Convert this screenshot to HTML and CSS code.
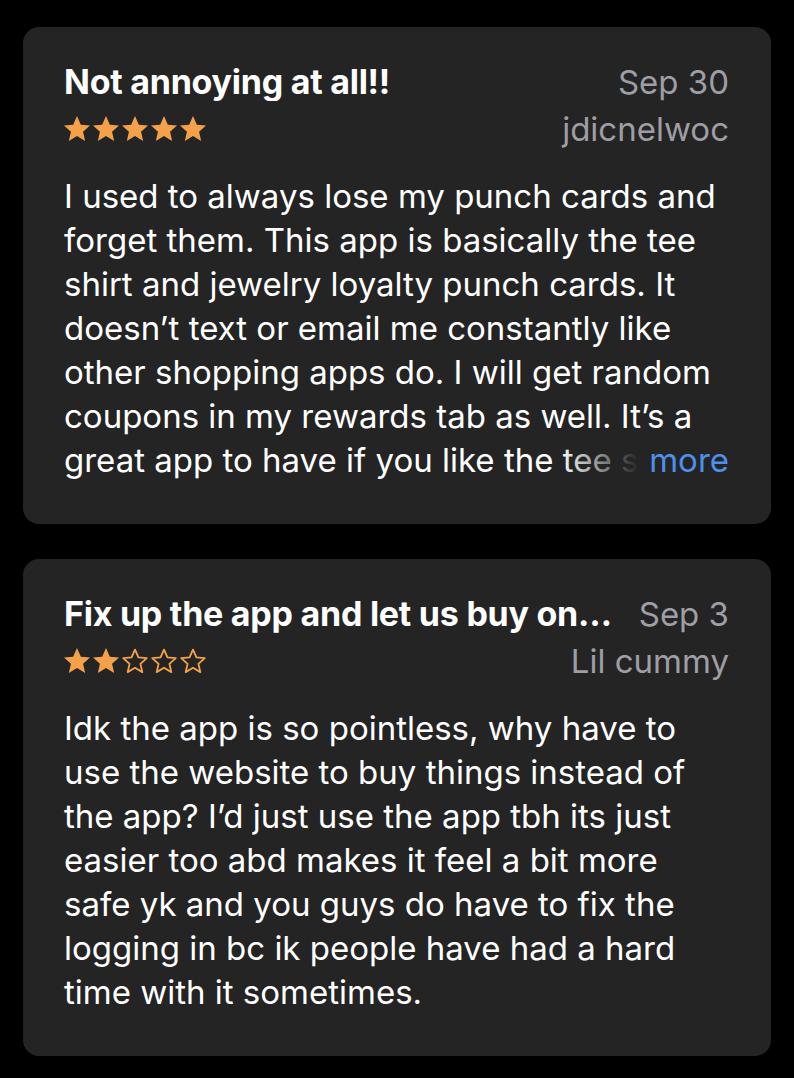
FILE: index.html
```
<!DOCTYPE html>
<html lang="en">
<head>
    <meta charset="UTF-8">
    <meta name="viewport" content="width=device-width, initial-scale=1.0">
    <title>Reviews</title>
    <link rel="stylesheet" href="styles.css">
</head>
<body>
    <div class="list">
        <div class="review">
            <div class="head">
                <div class="title">Not annoying at all!!</div>
                <div class="date">Sep 30</div>
            </div>
            <div class="sub">
                <div class="stars">
                    <svg viewBox="1.5 1.5 21 20"><path class="full" d="M12 1.5l3.1 6.9 7.4.7-5.6 5 1.7 7.4L12 17.6l-6.6 3.9 1.7-7.4-5.6-5 7.4-.7z"/></svg>
                    <svg viewBox="1.5 1.5 21 20"><path class="full" d="M12 1.5l3.1 6.9 7.4.7-5.6 5 1.7 7.4L12 17.6l-6.6 3.9 1.7-7.4-5.6-5 7.4-.7z"/></svg>
                    <svg viewBox="1.5 1.5 21 20"><path class="full" d="M12 1.5l3.1 6.9 7.4.7-5.6 5 1.7 7.4L12 17.6l-6.6 3.9 1.7-7.4-5.6-5 7.4-.7z"/></svg>
                    <svg viewBox="1.5 1.5 21 20"><path class="full" d="M12 1.5l3.1 6.9 7.4.7-5.6 5 1.7 7.4L12 17.6l-6.6 3.9 1.7-7.4-5.6-5 7.4-.7z"/></svg>
                    <svg viewBox="1.5 1.5 21 20"><path class="full" d="M12 1.5l3.1 6.9 7.4.7-5.6 5 1.7 7.4L12 17.6l-6.6 3.9 1.7-7.4-5.6-5 7.4-.7z"/></svg>
                </div>
                <div class="author">jdicnelwoc</div>
            </div>
            <div class="body clamp">
                I used to always lose my punch cards and<br>
                forget them. This app is basically the tee<br>
                shirt and jewelry loyalty punch cards. It<br>
                doesn’t text or email me constantly like<br>
                other shopping apps do. I will get random<br>
                coupons in my rewards tab as well. It’s a<br>
                great app to have if you like the tee shirt and jewelry
                <span class="more">more</span>
            </div>
        </div>

        <div class="review">
            <div class="head">
                <div class="title">Fix up the app and let us buy on the app please</div>
                <div class="date">Sep 3</div>
            </div>
            <div class="sub">
                <div class="stars">
                    <svg viewBox="1.5 1.5 21 20"><path class="full" d="M12 1.5l3.1 6.9 7.4.7-5.6 5 1.7 7.4L12 17.6l-6.6 3.9 1.7-7.4-5.6-5 7.4-.7z"/></svg>
                    <svg viewBox="1.5 1.5 21 20"><path class="full" d="M12 1.5l3.1 6.9 7.4.7-5.6 5 1.7 7.4L12 17.6l-6.6 3.9 1.7-7.4-5.6-5 7.4-.7z"/></svg>
                    <svg viewBox="1.5 1.5 21 20"><path class="empty" d="M12 2.7l2.8 6.3 6.7.6-5.1 4.6 1.5 6.7L12 17.4l-5.9 3.5 1.5-6.7-5.1-4.6 6.7-.6z"/></svg>
                    <svg viewBox="1.5 1.5 21 20"><path class="empty" d="M12 2.7l2.8 6.3 6.7.6-5.1 4.6 1.5 6.7L12 17.4l-5.9 3.5 1.5-6.7-5.1-4.6 6.7-.6z"/></svg>
                    <svg viewBox="1.5 1.5 21 20"><path class="empty" d="M12 2.7l2.8 6.3 6.7.6-5.1 4.6 1.5 6.7L12 17.4l-5.9 3.5 1.5-6.7-5.1-4.6 6.7-.6z"/></svg>
                </div>
                <div class="author">Lil cummy</div>
            </div>
            <div class="body">
                Idk the app is so pointless, why have to<br>
                use the website to buy things instead of<br>
                the app? I’d just use the app tbh its just<br>
                easier too abd makes it feel a bit more<br>
                safe yk and you guys do have to fix the<br>
                logging in bc ik people have had a hard<br>
                time with it sometimes.
            </div>
        </div>
    </div>
</body>
</html>
```

FILE: styles.css
```
* {
    margin: 0;
    padding: 0;
    box-sizing: border-box;
}
body {
    background: #000;
    font-family: Inter, "Noto Sans", sans-serif;
    color: #fff;
}
.list {
    display: flex;
    flex-direction: column;
    gap: 35px;
    padding: 27px 23px 0 23px;
}
.review {
    height: 497px;
    background: #242424;
    border-radius: 16px;
    padding: 36px 42px 0 41px;
}
.head {
    display: flex;
    justify-content: space-between;
    align-items: baseline;
    gap: 23px;
    height: 38px;
    line-height: 38px;
}
.title {
    font-size: 34px;
    font-weight: 700;
    letter-spacing: -0.25px;
    white-space: nowrap;
    overflow: hidden;
    text-overflow: ellipsis;
    min-width: 0;
}
.date {
    font-size: 33px;
    color: #9e9ea4;
    white-space: nowrap;
    flex-shrink: 0;
}
.sub {
    display: flex;
    justify-content: space-between;
    align-items: center;
    height: 56px;
}
.stars {
    display: flex;
    gap: 3px;
    padding-bottom: 2px;
}
.stars svg {
    width: 26px;
    height: 25px;
}
.full {
    fill: #f4a14a;
}
.empty {
    fill: none;
    stroke: #f4a14a;
    stroke-width: 1.5;
    stroke-linejoin: round;
}
.author {
    font-size: 33px;
    color: #9e9ea4;
}
.body {
    margin-top: 17px;
    font-size: 33px;
    line-height: 44px;
    white-space: nowrap;
}
.clamp {
    position: relative;
    height: 308px;
    overflow: hidden;
}
.more {
    position: absolute;
    right: 0;
    bottom: 0;
    padding-left: 90px;
    line-height: 44px;
    color: #4e8fee;
    background: linear-gradient(to right, rgba(36, 36, 36, 0), #242424 80px);
}
```
